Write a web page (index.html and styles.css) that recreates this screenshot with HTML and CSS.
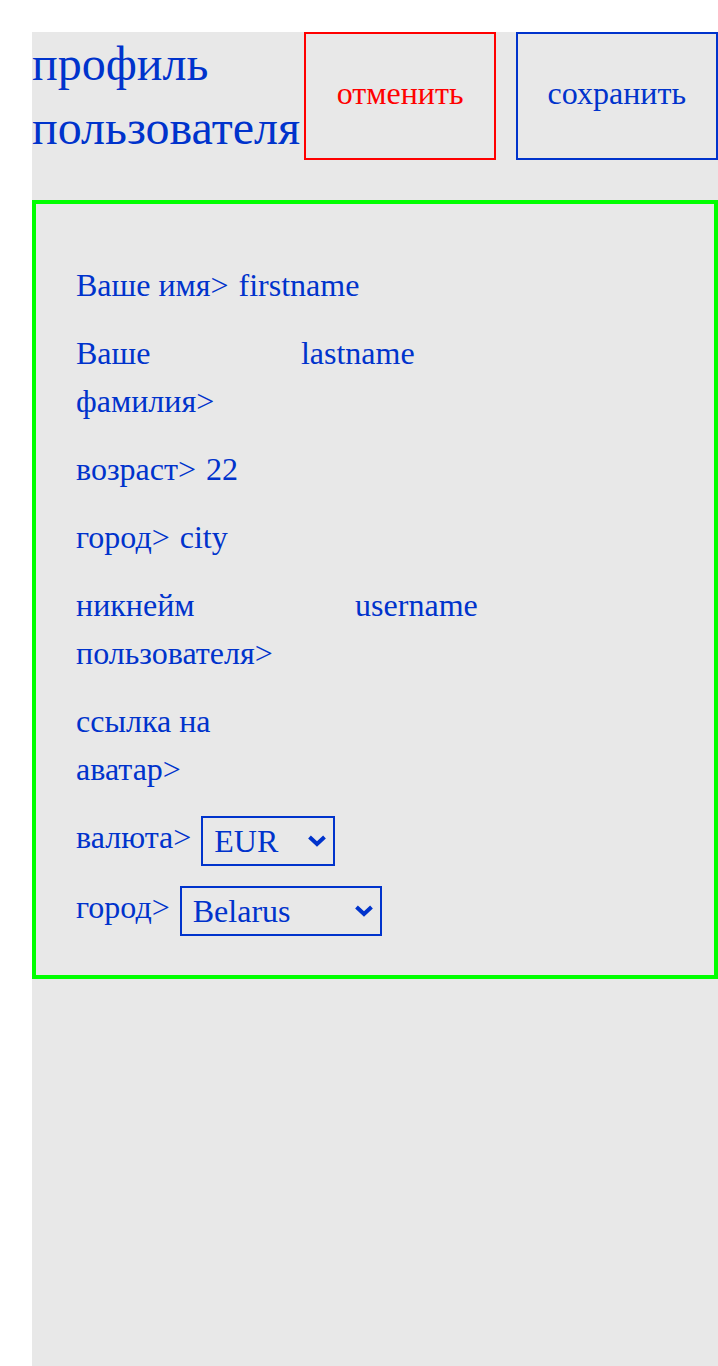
FILE: index.html
```html
<!DOCTYPE html>
<html lang="ru">
<head>
<meta charset="utf-8">
<title>профиль пользователя</title>
<link rel="stylesheet" href="styles.css">
</head>
<body>
<div class="page">
  <header class="header">
    <h1 class="title">профиль пользователя</h1>
    <button class="btn btn-cancel" type="button">отменить</button>
    <button class="btn btn-save" type="button">сохранить</button>
  </header>
  <section class="card">
    <div class="row"><label class="label">Ваше имя&gt;</label><input class="value" type="text" value="firstname"></div>
    <div class="row"><label class="label">Ваше фамилия&gt;</label><input class="value" type="text" value="lastname"></div>
    <div class="row"><label class="label">возраст&gt;</label><input class="value" type="text" value="22"></div>
    <div class="row"><label class="label">город&gt;</label><input class="value" type="text" value="city"></div>
    <div class="row"><label class="label">никнейм пользователя&gt;</label><input class="value" type="text" value="username"></div>
    <div class="row"><label class="label">ссылка на аватар&gt;</label><input class="value" type="text" value=""></div>
    <div class="row"><label class="label">валюта&gt;</label>
      <span class="select-wrap">
        <select class="select select-currency">
          <option>EUR</option>
          <option>USD</option>
          <option>RUB</option>
        </select>
        <svg class="chevron" width="20" height="13" viewBox="0 0 20 13" aria-hidden="true"><path d="M2.5 3 L10 10 L17.5 3" fill="none" stroke="currentColor" stroke-width="4"/></svg>
      </span>
    </div>
    <div class="row"><label class="label">город&gt;</label>
      <span class="select-wrap">
        <select class="select select-country">
          <option>Belarus</option>
          <option>Russia</option>
          <option>Ukraine</option>
          <option>Kazakhstan</option>
        </select>
        <svg class="chevron" width="20" height="13" viewBox="0 0 20 13" aria-hidden="true"><path d="M2.5 3 L10 10 L17.5 3" fill="none" stroke="currentColor" stroke-width="4"/></svg>
      </span>
    </div>
  </section>
</div>
</body>
</html>
```
FILE: styles.css
```css
html, body {
  margin: 0;
  padding: 0;
  background: #ffffff;
}

body {
  font-family: "Liberation Serif", "Times New Roman", serif;
  color: #0033cc;
}

.page {
  margin: 32px 0 0 32px;
  background: #e8e8e8;
  min-height: calc(100vh - 32px);
  box-sizing: border-box;
}

.header {
  display: flex;
  gap: 20px;
}

.title {
  flex: 1 1 auto;
  min-width: 0;
  margin: 0;
  font-size: 48px;
  line-height: 64px;
  font-weight: normal;
  color: #0033cc;
}

.btn {
  flex: 0 0 auto;
  font-family: inherit;
  font-size: 32px;
  background: transparent;
  padding: 0 30px 6px;
  margin: 0;
  cursor: pointer;
}

.btn-cancel {
  border: 2px solid #ff0000;
  color: #ff0000;
  padding-left: 31px;
}

.btn-save {
  border: 2px solid #0033cc;
  color: #0033cc;
}

.card {
  margin-top: 40px;
  border: 4px solid #00ff00;
  padding: 57px 40px 42px;
  display: flex;
  flex-direction: column;
  gap: 20px;
}

.row {
  display: flex;
  align-items: flex-start;
  gap: 10px;
  font-size: 32px;
  line-height: 48px;
}

.label {
  flex: 0 1 auto;
}

.value {
  flex: 0 1 auto;
  width: 383px;
  min-width: 0;
  border: none;
  background: transparent;
  padding: 0;
  margin: 0;
  font-family: inherit;
  font-size: 32px;
  line-height: 48px;
  height: 48px;
  color: #0033cc;
  outline: none;
}

.select-wrap {
  position: relative;
  display: inline-flex;
  flex: 0 0 auto;
  margin: 3px 0 -3px;
  color: #0033cc;
}

.select {
  appearance: none;
  -webkit-appearance: none;
  height: 50px;
  box-sizing: border-box;
  border: 2px solid #0033cc;
  border-radius: 0;
  background: transparent;
  color: #0033cc;
  font-family: inherit;
  font-size: 32px;
  padding: 0 36px 0 11px;
  margin: 0;
}

.select-currency {
  width: 134px;
}

.select-country {
  width: 202px;
}

.chevron {
  position: absolute;
  right: 8px;
  top: 18px;
  pointer-events: none;
}
```
